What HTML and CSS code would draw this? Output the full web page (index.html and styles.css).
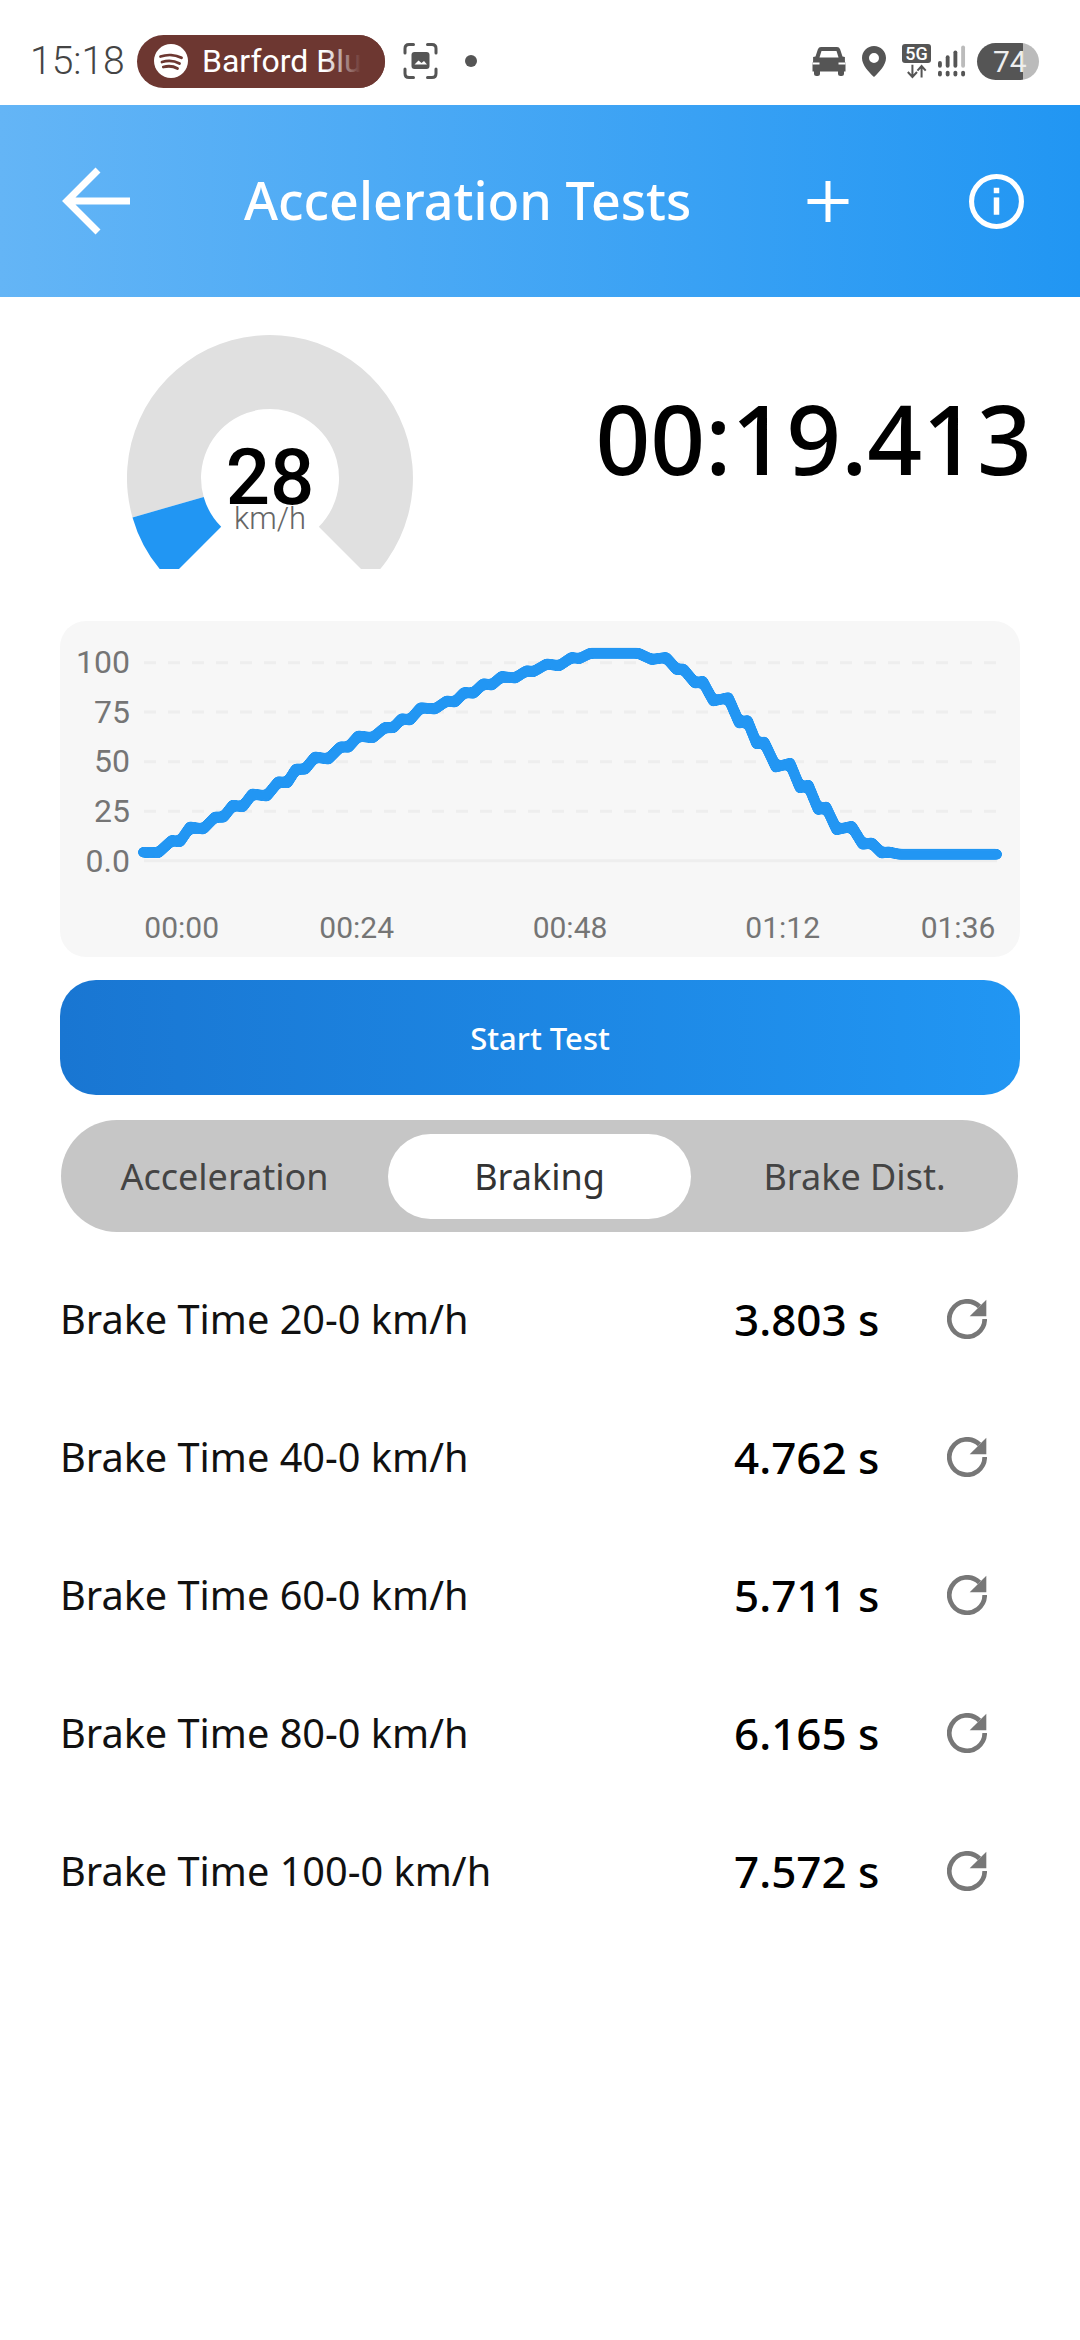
FILE: index.html
```html
<!DOCTYPE html>
<html lang="en">
<head>
  <meta charset="UTF-8">
  <meta name="viewport" content="width=device-width, initial-scale=1.0">
  <title>Acceleration Tests</title>
  <link rel="stylesheet" href="styles.css">
</head>
<body>
  <div class="page">
    <div class="status-bar">
      <span class="clock">15:18</span>
      <div class="media-pill">
        <svg class="spotify" viewBox="0 0 34 34">
          <circle cx="17" cy="17" r="17" fill="#fff"/>
          <path d="M6.5 12.5C13 10.2 21.5 10.6 27.5 13.8M8 18C13.5 16.3 20.5 16.8 25.5 19.5M9.3 23C14 21.8 19.5 22.2 23.5 24.5" fill="none" stroke="#6d3731" stroke-width="2.8" stroke-linecap="round"/>
        </svg>
        <span class="media-title">Barford Blue</span>
      </div>
      <svg class="scan" viewBox="0 0 34 36">
        <path d="M1.5 10V5.5Q1.5 1.5 5.5 1.5H10M24 1.5H28.5Q32.5 1.5 32.5 5.5V10M32.5 26V30.5Q32.5 34.5 28.5 34.5H24M10 34.5H5.5Q1.5 34.5 1.5 30.5V26" fill="none" stroke="#555" stroke-width="3" stroke-linecap="round"/>
        <path d="M11 9H23Q26 9 26 12V23Q26 26 23 26H11Q8 26 8 23V12Q8 9 11 9Z" fill="#555"/>
        <path d="M11 21.5L15 17.5L18 20L20.5 18L23.5 21.5Z" fill="#fff"/>
      </svg>
      <span class="dot"></span>
      <div class="status-icons">
        <svg class="car" viewBox="0 0 33 29">
          <path d="M8.5 0H24.5Q26.8 0 27.6 2.2L30 9.5L32.4 10V14.5L33 16V24.5H31.5V26.5Q31.5 29 29 29H28Q25.5 29 25.5 26.5V24.5H7.5V26.5Q7.500 29 5 29H4Q1.5 29 1.5 26.5V24.5H0V16L.6 14.5V10L3 9.5L5.4 2.2Q6.2 0 8.5 0Z" fill="#555"/>
          <path d="M9 4H24L26 10.500H7Z" fill="#fff"/>
          <path d="M0 16.500H7M26 16.500H33" stroke="#fff" stroke-width="1.800"/>
        </svg>
        <svg class="pin" viewBox="0 0 24 31">
          <path fill-rule="evenodd" d="M12 0C5.400 0 0 5.300 0 12C0 19 7 26.500 12 31C17 26.500 24 19 24 12C24 5.300 18.600 0 12 0ZM12 7A5 5 0 1 1 12 17A5 5 0 1 1 12 7Z" fill="#555"/>
        </svg>
        <div class="net">
          <span class="net-label">5G</span>
          <svg class="net-arrows" viewBox="0 0 24 15">
            <path d="M7 0V12M2 8L7 13.500L12 8M17 14V2M12.500 6.500L17 1.500L21.500 6.500" fill="none" stroke="#555" stroke-width="2.200"/>
          </svg>
        </div>
        <svg class="signal" viewBox="0 0 29 32">
          <g fill="#555">
            <rect x="0" y="26" width="4" height="6" rx="2"/>
            <rect x="8" y="26" width="4" height="6" rx="2"/>
            <rect x="16" y="26" width="4" height="6" rx="2"/>
            <rect x="24" y="26" width="4" height="6" rx="2"/>
            <rect x="0" y="16" width="4" height="7" rx="2"/>
            <rect x="8" y="10" width="4" height="13" rx="2"/>
            <rect x="16" y="5" width="4" height="18" rx="2"/>
          </g>
          <rect x="24" y="0" width="4" height="23" rx="2" fill="#bbb"/>
        </svg>
        <div class="battery"><span>74</span></div>
      </div>
    </div>

    <div class="app-bar">
      <svg class="back" viewBox="0 0 68 68">
        <path d="M68 34H5M36 3L5 34L36 65" fill="none" stroke="#fff" stroke-width="7"/>
      </svg>
      <h1 class="title">Acceleration Tests</h1>
      <svg class="add" viewBox="0 0 41 41">
        <path d="M20.500 0V41M0 20.500H41" stroke="#fff" stroke-width="5"/>
      </svg>
      <svg class="info" viewBox="0 0 54 54">
        <circle cx="27" cy="27" r="24.500" fill="none" stroke="#fff" stroke-width="5"/>
        <rect x="24.300" y="13.500" width="5.400" height="5.400" fill="#fff"/>
        <rect x="24.300" y="23" width="5.400" height="17" fill="#fff"/>
      </svg>
    </div>

    <div class="speed-panel">
      <div class="gauge">
        <svg class="gauge-arc" viewBox="0 0 286 234">
          <path d="M5.500 182.400A143 143 0 1 1 244.100 244.100L191.800 191.800A69 69 0 1 0 76.700 162Z" fill="#e0e0e0"/>
          <path d="M41.900 244.100A143 143 0 0 1 5.500 182.400L76.700 162A69 69 0 0 0 94.200 191.800Z" fill="#2196f3"/>
        </svg>
        <span class="gauge-value">28</span>
        <span class="gauge-unit">km/h</span>
      </div>
      <div class="timer">00:19.413</div>
    </div>

    <div class="chart-card">
      <svg class="chart" viewBox="0 0 960 336">
        <defs>
          <!-- softens the corners of the speed line -->
          <filter id="soften">
            <feGaussianBlur stdDeviation="1.6"/>
            <feComponentTransfer>
              <feFuncA type="linear" slope="6" intercept="-2.5"/>
            </feComponentTransfer>
          </filter>
        </defs>
        <path class="grid-line" d="M84 41.700H937M84 91H937M84 140.700H937M84 190.300H937"/>
        <path class="axis-line" d="M84 239.700H937"/>
        <text class="y-label" x="70" y="52.300">100</text>
        <text class="y-label" x="70" y="102">75</text>
        <text class="y-label" x="70" y="151.300">50</text>
        <text class="y-label" x="70" y="201.300">25</text>
        <text class="y-label" x="70" y="250.700">0.0</text>
        <polyline class="speed-line" filter="url(#soften)" points="83.300,231.300 98.300,231.700 111.700,219.500 120,220.700 130,206 143.300,208 155,196 163.300,196.300 172.700,184.300 182.700,185.700 192.300,173 206.700,175 218.300,160.700 227.300,161.700 236,148 245,148.300 255,136 268.300,138 280.700,125.700 288.300,126.300 298.300,115 312.700,116.700 325,106.400 333.300,106.700 341.700,97.700 350,99 360.700,86.700 375,88 386.700,80 395,81 404.300,71.400 413.300,72.300 423.300,62.700 431.700,64 441.700,55.400 455,57 466.700,49.700 473.300,50.700 486.700,43 499.300,44.700 511.700,36.400 519.300,37.700 530,32.300 578.300,32.300 591.700,38.500 606,36.400 616.700,48.500 623.300,48 635,62 642.700,60.400 653.300,80 668.300,76.700 679.300,102 687.300,99.400 696.700,122.600 704,121 716,146 730,142.400 740,166.600 748.300,164.400 758.300,188.600 766,186 776.700,208.600 791.700,205.400 802.700,223.300 811.700,222 821.700,232 828.300,231 840,233.300 936.700,233.300"/>
        <text class="x-label" x="121.700" y="317.300">00:00</text>
        <text class="x-label" x="296.700" y="317.300">00:24</text>
        <text class="x-label" x="510" y="317.300">00:48</text>
        <text class="x-label" x="722.700" y="317.300">01:12</text>
        <text class="x-label" x="898" y="317.300">01:36</text>
      </svg>
    </div>

    <button class="start-btn">Start Test</button>

    <div class="tabs">
      <div class="tab">Acceleration</div>
      <div class="tab active">Braking</div>
      <div class="tab">Brake Dist.</div>
    </div>

    <ul class="results">
      <li>
        <span class="result-name">Brake Time 20-0 km/h</span>
        <span class="result-value">3.803 s</span>
        <svg class="redo" viewBox="0 0 40 40"><path d="M37.700 20A17.700 17.700 0 1 1 32.500 7.500" fill="none" stroke="#777" stroke-width="4.700"/><path d="M39.300 .7V17.300H22.700Z" fill="#777"/></svg>
      </li>
      <li>
        <span class="result-name">Brake Time 40-0 km/h</span>
        <span class="result-value">4.762 s</span>
        <svg class="redo" viewBox="0 0 40 40"><path d="M37.700 20A17.700 17.700 0 1 1 32.500 7.500" fill="none" stroke="#777" stroke-width="4.700"/><path d="M39.300 .7V17.300H22.700Z" fill="#777"/></svg>
      </li>
      <li>
        <span class="result-name">Brake Time 60-0 km/h</span>
        <span class="result-value">5.711 s</span>
        <svg class="redo" viewBox="0 0 40 40"><path d="M37.700 20A17.700 17.700 0 1 1 32.500 7.500" fill="none" stroke="#777" stroke-width="4.700"/><path d="M39.300 .7V17.300H22.700Z" fill="#777"/></svg>
      </li>
      <li>
        <span class="result-name">Brake Time 80-0 km/h</span>
        <span class="result-value">6.165 s</span>
        <svg class="redo" viewBox="0 0 40 40"><path d="M37.700 20A17.700 17.700 0 1 1 32.500 7.500" fill="none" stroke="#777" stroke-width="4.700"/><path d="M39.300 .7V17.300H22.700Z" fill="#777"/></svg>
      </li>
      <li>
        <span class="result-name">Brake Time 100-0 km/h</span>
        <span class="result-value">7.572 s</span>
        <svg class="redo" viewBox="0 0 40 40"><path d="M37.700 20A17.700 17.700 0 1 1 32.500 7.500" fill="none" stroke="#777" stroke-width="4.700"/><path d="M39.300 .7V17.300H22.700Z" fill="#777"/></svg>
      </li>
    </ul>
  </div>
</body>
</html>
```

FILE: styles.css
```css
* {
  padding: 0;
  margin: 0;
  box-sizing: border-box;
}
html,body {
  width: 100%;
  height: 100%;
  background: #fff;
}
body {
  font-family: "Noto Sans", "Open Sans", sans-serif;
  color: #000;
}
ul {
  list-style: none;
}
svg {
  display: block;
  flex-shrink: 0;
}
.page {
  width: 1080px;
  height: 2340px;
  overflow: hidden;
}

/* status bar */
.status-bar {
  height: 105px;
  display: flex;
  align-items: center;
  padding: 17px 41px 0 30px;
}
.clock {
  width: 107px;
  font-family: Roboto, sans-serif;
  font-weight: 300;
  font-size: 39px;
  color: #444;
}
.media-pill {
  width: 248px;
  height: 53px;
  border-radius: 27px;
  background: #6d3731;
  display: flex;
  align-items: center;
  padding-left: 17px;
  position: relative;
  overflow: hidden;
}
.media-pill::after {
  content: "";
  position: absolute;
  right: 0;
  top: 0;
  bottom: 0;
  width: 60px;
  background: linear-gradient(to right, rgba(109,55,49,0), #6d3731 60%);
}
.spotify {
  width: 34px;
  height: 34px;
}
.media-title {
  margin-left: 14px;
  font-family: Roboto, sans-serif;
  font-size: 32px;
  color: #fff;
  white-space: nowrap;
}
.scan {
  width: 35px;
  height: 36px;
  margin-left: 18px;
}
.dot {
  width: 12px;
  height: 12px;
  border-radius: 50%;
  background: #555;
  margin-left: 27px;
}
.status-icons {
  margin-left: auto;
  display: flex;
  align-items: center;
}
.car {
  width: 34px;
  height: 29px;
}
.pin {
  width: 24px;
  height: 31px;
  margin-left: 16px;
}
.net {
  width: 29px;
  margin-left: 16px;
}
.net-label {
  display: block;
  height: 19px;
  border-radius: 3px;
  background: #555;
  color: #fff;
  font-family: Roboto, sans-serif;
  font-weight: 500;
  font-size: 18px;
  line-height: 19px;
  text-align: center;
}
.net-arrows {
  width: 22px;
  height: 15px;
  margin: 1px auto 0;
}
.signal {
  width: 28px;
  height: 32px;
  margin-left: 7px;
}
.battery {
  width: 62px;
  height: 37px;
  margin-left: 11px;
  border-radius: 19px;
  background: linear-gradient(to right, #555 46px, #bbb 46px);
  color: #eee;
  font-family: Roboto, sans-serif;
  font-size: 30px;
  line-height: 37px;
  padding-left: 16px;
}

/* app bar */
.app-bar {
  height: 192px;
  background: linear-gradient(to right, #64b5f6, #2196f3);
  display: flex;
  align-items: center;
  padding-left: 62px;
  color: #fff;
}
.back {
  width: 68px;
  height: 68px;
}
.title {
  margin-left: 114px;
  width: 563px;
  font-size: 52px;
  font-weight: 500;
  line-height: 68px;
  padding-bottom: 2px;
  white-space: nowrap;
}
.add {
  width: 42px;
  height: 41px;
}
.info {
  width: 55px;
  height: 55px;
  margin-left: 120px;
}

/* gauge + timer */
.speed-panel {
  height: 324px;
  display: flex;
  padding: 38px 48px 0 127px;
  justify-content: space-between;
}
.gauge {
  position: relative;
  width: 286px;
  height: 234px;
}
.gauge-arc {
  width: 286px;
  height: 234px;
}
.gauge-value {
  position: absolute;
  left: 0;
  right: 0;
  top: 97px;
  text-align: center;
  font-family: Roboto, sans-serif;
  font-weight: 500;
  font-size: 78px;
  line-height: 92px;
}
.gauge-unit {
  position: absolute;
  left: 0;
  right: 0;
  top: 166px;
  text-align: center;
  font-family: Roboto, sans-serif;
  font-weight: 300;
  font-size: 31px;
  line-height: 36px;
  color: #666;
}
.timer {
  font-size: 96px;
  font-weight: 500;
  line-height: 130px;
  margin-top: 38px;
}

/* chart */
.chart-card {
  width: 960px;
  height: 336px;
  margin-left: 60px;
  border-radius: 26px;
  background: #f7f7f7;
}
.chart {
  width: 960px;
  height: 336px;
}
.grid-line {
  fill: none;
  stroke: #eee;
  stroke-width: 3;
  stroke-dasharray: 12 12;
}
.axis-line {
  fill: none;
  stroke: #eee;
  stroke-width: 3;
}
.speed-line {
  fill: none;
  stroke: #2196f3;
  stroke-width: 11;
  stroke-linecap: round;
  stroke-linejoin: round;
}
.y-label {
  font-family: Roboto, sans-serif;
  font-size: 32px;
  fill: #757575;
  text-anchor: end;
}
.x-label {
  font-family: Roboto, sans-serif;
  font-size: 30px;
  fill: #757575;
  text-anchor: middle;
}

/* button + tabs */
.start-btn {
  display: block;
  width: 960px;
  height: 115px;
  margin: 23px 0 0 60px;
  border: 0;
  border-radius: 36px;
  background: linear-gradient(to right, #1976d2, #2196f3);
  color: #fff;
  font-family: inherit;
  font-size: 31px;
  font-weight: 500;
}
.tabs {
  width: 957px;
  height: 112px;
  margin: 25px 0 0 61px;
  padding: 14px 6px 13px;
  border-radius: 56px;
  background: #c6c6c6;
  display: grid;
  grid-template-columns: repeat(3, 1fr);
}
.tab {
  margin: 0 6px;
  border-radius: 43px;
  display: flex;
  align-items: center;
  justify-content: center;
  font-size: 36px;
  color: #444;
}
.tab.active {
  background: #fff;
  color: #333;
}

/* results */
.results {
  margin-top: 18px;
}
.results li {
  height: 138px;
  display: flex;
  align-items: center;
  padding-left: 60px;
}
.result-name {
  flex: 1;
  font-size: 39.7px;
  color: #111;
}
.result-value {
  width: 213px;
  font-size: 44px;
  font-weight: 500;
}
.redo {
  width: 40px;
  height: 40px;
  margin-right: 93px;
}
```
